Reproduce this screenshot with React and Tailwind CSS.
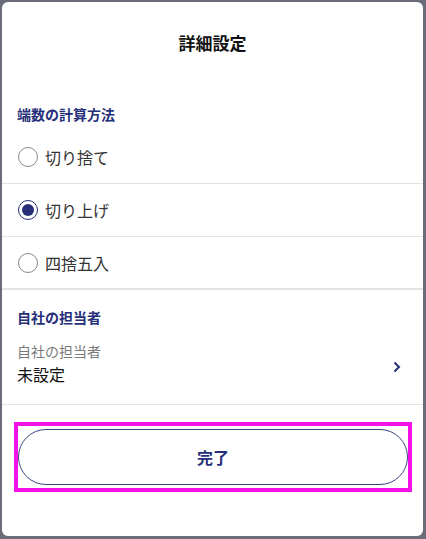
import React, { useState } from 'react';

const options = ['切り捨て', '切り上げ', '四捨五入'];

const Radio = ({ checked }) => (
    <span className={`flex h-[20px] w-[20px] items-center justify-center rounded-full border-[1.5px] ${checked ? 'border-[#26307a]' : 'border-[#8a8a8a]'}`}>
        {checked && <span className="h-[12px] w-[12px] rounded-full bg-[#26307a]" />}
    </span>
);

const App = () => {
    const [rounding, setRounding] = useState(1);

    return (
        <div
            className="h-[539px] w-[426px] bg-[#6a6d77] pl-[2px] pt-[2px]"
            style={{ fontFamily: '"Noto Sans CJK JP", "Noto Sans", sans-serif' }}
        >
            <div className="flex h-[534px] w-[421px] flex-col overflow-hidden rounded-[6px] bg-white">
                {/* header */}
                <div className="flex h-[82px] items-center justify-center">
                    <h1 className="text-[17px] font-bold leading-[22px] text-[#111]">詳細設定</h1>
                </div>

                {/* rounding method */}
                <div className="px-[15px] pb-[8px] pt-[21px]">
                    <p className="text-[14px] font-bold leading-[18px] text-[#26307a]">端数の計算方法</p>
                </div>
                <div>
                    {options.map((label, i) => (
                        <button
                            key={label}
                            type="button"
                            onClick={() => setRounding(i)}
                            className={`flex h-[53px] w-full items-center gap-[7px] border-b border-[#e3e3e3] pl-[16px] text-left ${i === options.length - 1 ? 'border-b-[2px]' : ''}`}
                        >
                            <Radio checked={rounding === i} />
                            <span className="text-[16px] leading-[20px] text-[#333]">{label}</span>
                        </button>
                    ))}
                </div>

                {/* staff */}
                <div className="px-[15px] pt-[18px]">
                    <p className="text-[14px] font-bold leading-[18px] text-[#26307a]">自社の担当者</p>
                </div>
                <button type="button" className="flex h-[79px] w-full items-center justify-between border-b border-[#e3e3e3] pl-[15px] pr-[22px] text-left">
                    <div className="flex flex-col pb-[4px]">
                        <span className="text-[14px] leading-[18px] text-[#7a7a7a]">自社の担当者</span>
                        <span className="mt-[4px] text-[16px] leading-[20px] text-[#111]">未設定</span>
                    </div>
                    <svg width="8" height="12" viewBox="0 0 8 12" className="mt-[4px]">
                        <polyline points="1.5,1.5 6,6 1.5,10.5" fill="none" stroke="#26307a" strokeWidth="2" />
                    </svg>
                </button>

                {/* footer */}
                <div className="pl-[12px] pr-[11px] pt-[17px]">
                    <div className="border-4 border-[#f512e8] py-[3px]">
                        <button
                            type="button"
                            className="flex h-[56px] w-full items-center justify-center rounded-full border border-[#3a4280] bg-white text-[16px] font-bold text-[#26307a]"
                        >
                            完了
                        </button>
                    </div>
                </div>
            </div>
        </div>
    );
};

export default App;
